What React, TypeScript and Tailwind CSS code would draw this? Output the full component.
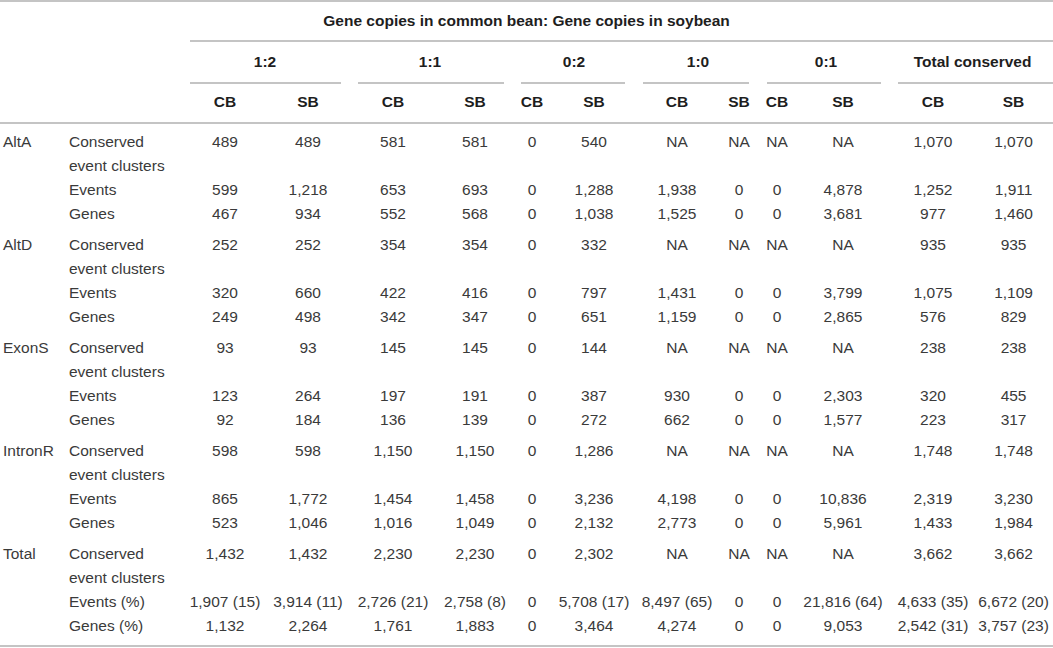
type Row = { label: string; values: string[] };
type Group = { name: string; rows: Row[] };

const groups: Group[] = [
  {
    name: 'AltA',
    rows: [
      { label: 'Conserved|event clusters', values: ['489', '489', '581', '581', '0', '540', 'NA', 'NA', 'NA', 'NA', '1,070', '1,070'] },
      { label: 'Events', values: ['599', '1,218', '653', '693', '0', '1,288', '1,938', '0', '0', '4,878', '1,252', '1,911'] },
      { label: 'Genes', values: ['467', '934', '552', '568', '0', '1,038', '1,525', '0', '0', '3,681', '977', '1,460'] },
    ],
  },
  {
    name: 'AltD',
    rows: [
      { label: 'Conserved|event clusters', values: ['252', '252', '354', '354', '0', '332', 'NA', 'NA', 'NA', 'NA', '935', '935'] },
      { label: 'Events', values: ['320', '660', '422', '416', '0', '797', '1,431', '0', '0', '3,799', '1,075', '1,109'] },
      { label: 'Genes', values: ['249', '498', '342', '347', '0', '651', '1,159', '0', '0', '2,865', '576', '829'] },
    ],
  },
  {
    name: 'ExonS',
    rows: [
      { label: 'Conserved|event clusters', values: ['93', '93', '145', '145', '0', '144', 'NA', 'NA', 'NA', 'NA', '238', '238'] },
      { label: 'Events', values: ['123', '264', '197', '191', '0', '387', '930', '0', '0', '2,303', '320', '455'] },
      { label: 'Genes', values: ['92', '184', '136', '139', '0', '272', '662', '0', '0', '1,577', '223', '317'] },
    ],
  },
  {
    name: 'IntronR',
    rows: [
      { label: 'Conserved|event clusters', values: ['598', '598', '1,150', '1,150', '0', '1,286', 'NA', 'NA', 'NA', 'NA', '1,748', '1,748'] },
      { label: 'Events', values: ['865', '1,772', '1,454', '1,458', '0', '3,236', '4,198', '0', '0', '10,836', '2,319', '3,230'] },
      { label: 'Genes', values: ['523', '1,046', '1,016', '1,049', '0', '2,132', '2,773', '0', '0', '5,961', '1,433', '1,984'] },
    ],
  },
  {
    name: 'Total',
    rows: [
      { label: 'Conserved|event clusters', values: ['1,432', '1,432', '2,230', '2,230', '0', '2,302', 'NA', 'NA', 'NA', 'NA', '3,662', '3,662'] },
      { label: 'Events (%)', values: ['1,907 (15)', '3,914 (11)', '2,726 (21)', '2,758 (8)', '0', '5,708 (17)', '8,497 (65)', '0', '0', '21,816 (64)', '4,633 (35)', '6,672 (20)'] },
      { label: 'Genes (%)', values: ['1,132', '2,264', '1,761', '1,883', '0', '3,464', '4,274', '0', '0', '9,053', '2,542 (31)', '3,757 (23)'] },
    ],
  },
];

// group header line insets (left / right) inside each pair of columns
const ratios = [
  { name: '1:2', line: 'ml-[8px] mr-[7px]' },
  { name: '1:1', line: 'ml-[10px] mr-[8px]' },
  { name: '0:2', line: 'ml-[9px] mr-[11px]' },
  { name: '1:0', line: 'ml-[7px] mr-[11px]' },
  { name: '0:1', line: 'ml-[7px] mr-[11px]' },
  { name: 'Total conserved', line: 'ml-[6px] mr-0' },
];

const colWidths = [
  'w-[62px]', 'w-[120px]',
  'w-[86px]', 'w-[80px]',
  'w-[90px]', 'w-[74px]',
  'w-[40px]', 'w-[84px]',
  'w-[82px]', 'w-[42px]',
  'w-[34px]', 'w-[98px]',
  'w-[82px]', 'w-[79px]',
];

const head = "font-['Liberation_Sans',Arial,sans-serif] font-bold text-[15.5px] text-[#1e1e1e]";

export default function App() {
  return (
    <div className="w-[1053px] h-[648px] bg-white overflow-hidden">
      <div className="border-t-2 border-b-2 border-[#c4c4c4] w-[1053px]">
        <table className="table-fixed border-collapse w-[1053px] font-['Liberation_Sans',Arial,sans-serif] text-[15.5px] leading-[24px] text-[#3a3a3a]">
          <colgroup>
            {colWidths.map((w, i) => (
              <col key={i} className={w} />
            ))}
          </colgroup>
          <thead>
            <tr>
              <th colSpan={14} className="p-0">
                <div className={`h-[38px] flex items-center justify-center ${head}`}>
                  Gene copies in common bean: Gene copies in soybean
                </div>
                <div className="ml-[190px] h-[2px] bg-[#c4c4c4]" />
              </th>
            </tr>
            <tr>
              <th colSpan={2} className="p-0" />
              {ratios.map((r) => (
                <th key={r.name} colSpan={2} className="p-0">
                  <div className={`h-[40px] flex items-center justify-center ${head}`}>{r.name}</div>
                  <div className={`h-[2px] bg-[#c4c4c4] ${r.line}`} />
                </th>
              ))}
            </tr>
            <tr className="border-b-2 border-[#c4c4c4]">
              <th colSpan={2} className="p-0 h-[39px]" />
              {ratios.map((r) => [
                <th key={r.name + 'cb'} className={`p-0 pb-[3px] h-[39px] text-center ${head}`}>CB</th>,
                <th key={r.name + 'sb'} className={`p-0 pb-[3px] h-[39px] text-center ${head}`}>SB</th>,
              ])}
            </tr>
          </thead>
          <tbody>
            {groups.map((g, gi) =>
              g.rows.map((row, ri) => {
                const first = ri === 0;
                const last = ri === g.rows.length - 1;
                const isFinal = gi === groups.length - 1 && last;
                const pad = `${first ? 'pt-[6px]' : 'pt-0'} ${last ? (isFinal ? 'pb-[7px]' : 'pb-[1px]') : 'pb-0'}`;
                const [l1, l2] = row.label.split('|');
                return (
                  <tr key={g.name + ri} className="align-top">
                    <td className={`pl-[3px] pr-0 whitespace-nowrap ${pad}`}>{first ? g.name : ''}</td>
                    <td className={`pl-[7px] pr-0 whitespace-nowrap ${pad}`}>
                      {l1}
                      {l2 && (
                        <>
                          <br />
                          {l2}
                        </>
                      )}
                    </td>
                    {row.values.map((v, vi) => (
                      <td key={vi} className={`px-0 text-center whitespace-nowrap ${pad}`}>
                        {v}
                      </td>
                    ))}
                  </tr>
                );
              })
            )}
          </tbody>
        </table>
      </div>
    </div>
  );
}
